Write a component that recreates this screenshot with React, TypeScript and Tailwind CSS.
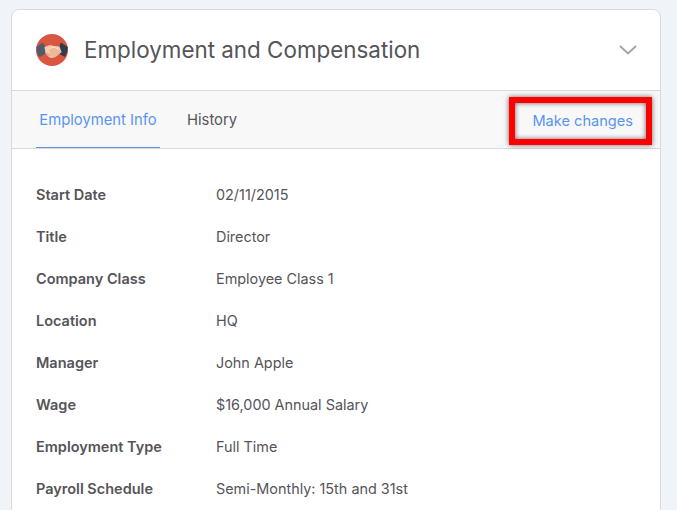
const rows: [string, string][] = [
  ["Start Date", "02/11/2015"],
  ["Title", "Director"],
  ["Company Class", "Employee Class 1"],
  ["Location", "HQ"],
  ["Manager", "John Apple"],
  ["Wage", "$16,000 Annual Salary"],
  ["Employment Type", "Full Time"],
  ["Payroll Schedule", "Semi-Monthly: 15th and 31st"],
];

function Handshake() {
  return (
    <svg width="32" height="32" viewBox="0 0 32 32" className="shrink-0">
      <circle cx="16" cy="16" r="16" fill="#d95641" />
      <path d="M0.4 13 L7 8.5 L12 18.5 L3.5 23 Q0 18 0.4 13Z" fill="#4f5c6e" />
      <path d="M31.8 13 L25 8.5 L20.5 18.5 L29 23 Q32 18 31.8 13Z" fill="#2e3c4e" />
      <path d="M8.5 13 L14 11 L18 12 L23.5 12.5 L25.5 18 L20 22.5 Q16 25 13 23 L9.5 19.5Z" fill="#f2c9ab" />
      <path d="M11 18.5 L14.5 21 L13 23 L9.5 19.5Z" fill="#e6a98a" />
      <path d="M14 21 L17.5 23.5 L20 22.5 L25.5 18 L23.5 15 L18 13.5 L13.5 14.5Z" fill="#eeb898" />
      <path d="M13.5 14.5 L18 13 L23 15.5" stroke="#fbe6d6" strokeWidth="1" fill="none" />
    </svg>
  );
}

export default function App() {
  return (
    <div className="h-[510px] w-[677px] overflow-hidden bg-[#f0f3f7] pl-[11px] pt-[9px] font-['Inter',sans-serif]">
      <div className="h-[520px] w-[650px] rounded-t-lg border border-[#d7d9dc] bg-white">
        <div className="flex h-[81px] items-center justify-between border-b border-[#d7d9dc] pl-[24px] pr-[23px]">
          <div className="flex items-center gap-[16px]">
            <Handshake />
            <span className="text-[22.4px] leading-none text-[#555459]">Employment and Compensation</span>
          </div>
          <svg width="18" height="10" viewBox="0 0 18 10" fill="none">
            <path d="M1 1 L9 8.5 L17 1" stroke="#a3a5a8" strokeWidth="2" />
          </svg>
        </div>
        <div className="relative flex h-[58px] items-start justify-between border-b border-[#d7d9dc] bg-[#f8f8f9] pl-[24px] pr-[27px]">
          <div className="flex h-[57px] text-[14.8px]">
            <div className="flex h-full w-[124px] items-center justify-center border-b border-[#5c93e0] pt-[2px] text-[#5b94f0]">Employment Info</div>
            <div className="ml-[27px] flex h-full items-center pt-[2px] text-[#555459]">History</div>
          </div>
          <div className="flex h-[57px] items-center pt-[4px] text-[14.6px] text-[#5b94f0]">Make changes</div>
          <div className="absolute left-[497px] top-[6px] h-[48px] w-[143px] border-[6px] border-[#fe0000] shadow-[0_0_5px_rgba(0,0,0,0.6),inset_0_0_5px_rgba(0,0,0,0.6)]" />
        </div>
        <div className="flex flex-col gap-[21px] pl-[24px] pt-[35px] text-[14.4px] leading-[21px]">
          {rows.map(([k, v]) => (
            <div key={k} className="flex">
              <div className="w-[180px] text-[14.5px] font-semibold text-[#555459]">{k}</div>
              <div className="text-[#555459]">{v}</div>
            </div>
          ))}
        </div>
      </div>
    </div>
  );
}
